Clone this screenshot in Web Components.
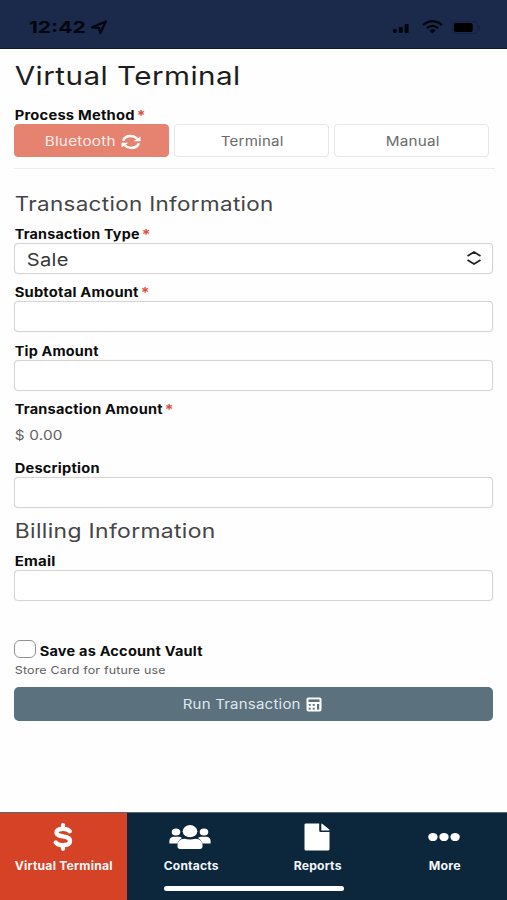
<!DOCTYPE html>
<html lang="en">
<head>
<meta charset="utf-8">
<title>Virtual Terminal</title>
<style>
html,body{margin:0;height:100%;background:#fefefe}
body{font-family:Inter,"Liberation Sans",sans-serif;overflow:hidden}
</style>
</head>
<body>
<terminal-app></terminal-app>
<script>
const shadow = (el, html) => { el.attachShadow({mode:'open'}).innerHTML = html; };

// Wide-set text: the glyphs are stretched to fill the width given in "w".
class WideText extends HTMLElement {
  constructor(){ super(); shadow(this, `<style>
    :host{display:block;flex:none;white-space:nowrap;text-align:left;line-height:18px;height:18px;font-size:12.9px;letter-spacing:.015em}
    span{display:inline-block;transform-origin:0 50%;line-height:inherit;vertical-align:top}
    </style><span><slot></slot></span>`); }
  connectedCallback(){
    const w = parseFloat(this.getAttribute('w'));
    this.style.width = w + 'px';
    const s = this.shadowRoot.querySelector('span');
    s.style.transform = `translateX(.7px) scaleX(${w / s.getBoundingClientRect().width})`;
  }
}
customElements.define('wide-text', WideText);

class StatusBar extends HTMLElement {
  constructor(){ super(); shadow(this, `<style>
    :host{display:flex;box-sizing:border-box;height:49px;padding:6px 26px 0 28px;background:#1b294b;border-bottom:1px solid #10193a;align-items:center;color:#03060f}
    wide-text{font-size:16.3px;font-weight:700;letter-spacing:0}
    .loc{margin-left:5px}.sig{margin-left:auto}.wifi{margin-left:13px}.bat{margin-left:9px}
    svg{display:block}
    </style>
    <wide-text w="57">12:42</wide-text>
    <svg class="loc" width="18" height="15" viewBox="0 0 18 15"><path d="M2 7.3 L15.8 1.5 L10.3 13 L9 7.8Z" fill="none" stroke="#03060f" stroke-width="2.3" stroke-linejoin="round"/></svg>
    <svg class="sig" width="17" height="12" viewBox="0 0 17 12" style="margin-top:2px"><g fill="#03060f"><rect x="1" y="7" width="3.7" height="4" rx="1"/><rect x="6.8" y="5" width="4" height="6" rx="1"/><rect x="12.6" y="2" width="4" height="9" rx="1"/></g></svg>
    <svg class="wifi" width="21" height="14" viewBox="0 0 21 14"><g fill="none" stroke="#03060f" stroke-width="2.1"><path d="M1 5 Q10.5 -2.6 20 5"/><path d="M4.7 8.3 Q10.5 3.6 16.3 8.3"/></g><path d="M7.3 10.5 Q10.5 8.1 13.7 10.5 L10.5 13.6Z" fill="#03060f"/></svg>
    <svg class="bat" width="29" height="13" viewBox="0 0 29 13"><rect x=".5" y=".5" width="25" height="12" rx="3.5" fill="none" stroke="#142042"/><rect x="2" y="2" width="18.7" height="9" rx="2" fill="#000"/><path d="M27.3 4.5v4" stroke="#142042" stroke-width="1.3"/></svg>`); }
}
customElements.define('status-bar', StatusBar);

class FormLabel extends HTMLElement {
  constructor(){ super(); shadow(this, `<style>
    :host{display:flex;gap:2px;height:18px;color:#0c0c0c;font-weight:750}
    wide-text{line-height:20px}
    .star{color:#dc5140;font-weight:700;font-size:14px}
    :host(:not([required])) .star{display:none}
    </style><wide-text w="${this.getAttribute('w')}"><slot></slot></wide-text><wide-text class="star" w="9">*</wide-text>`); }
}
customElements.define('form-label', FormLabel);

class FormField extends HTMLElement {
  constructor(){ super();
    const req = this.hasAttribute('required') ? 'required' : '';
    shadow(this, `<style>
    :host{display:block;height:58.65px}
    .box{box-sizing:border-box;display:flex;align-items:center;height:31px;width:479px;border:1.5px solid #d5d5d5;border-radius:4px;background:#fff;padding:3px 10px 0 11px;box-shadow:0 0 1px #ddd}
    :host([plain]) .box{border:0;background:none;box-shadow:none;padding:0;height:35px}
    </style><form-label ${req} w="${this.getAttribute('w')}">${this.getAttribute('label')}</form-label><div class="box"><slot></slot></div>`); }
}
customElements.define('form-field', FormField);

class MethodButton extends HTMLElement {
  constructor(){ super(); shadow(this, `<style>
    :host{box-sizing:border-box;display:flex;align-items:center;justify-content:center;gap:6px;height:33px;width:155px;border:1.5px solid #e7e7e9;border-radius:4px;color:#6b6b6b;background:#fff;padding-top:3px}
    :host([active]){background:#e58270;border-color:#e58270;color:#fbece8;padding-left:1px}
    </style><slot></slot>`); }
}
customElements.define('method-button', MethodButton);

class TabItem extends HTMLElement {
  constructor(){ super(); shadow(this, `<style>
    :host{display:flex;flex:1;flex-direction:column;align-items:center;color:#f4f6f8;padding-top:7px}
    :host([active]){background:#d64225}
    .icon{height:36px;display:flex;align-items:center}
    wide-text{font-size:11.4px;font-weight:750;line-height:20px}
    </style><div class="icon"><slot></slot></div><wide-text w="${this.getAttribute('w')}">${this.getAttribute('label')}</wide-text>`); }
}
customElements.define('tab-item', TabItem);

class TabBar extends HTMLElement {
  constructor(){ super(); shadow(this, `<style>
    :host{display:flex;position:relative;box-sizing:border-box;height:88px;background:#0c263b;border-top:1px solid #5b6670}
    .home{position:absolute;left:164px;top:73px;width:180px;height:5px;border-radius:3px;background:#fff}
    svg{display:block;margin-top:-2px}
    </style>
    <tab-item active label="Virtual Terminal" w="98"><svg width="20" height="28" viewBox="0 0 20 28"><path d="M16.7 8.3 C15.5 6.5 12.8 5.8 10 5.8 C6.5 5.8 3.5 6.8 3.5 9.6 C3.5 15.1 17 11.6 17 17.8 C17 21 13.7 22.2 10 22.2 C7 22.2 4 21.2 2.8 19.5 M10 2.2V5.6 M10 22.4V25.8" fill="none" stroke="#fff" stroke-width="4.3" stroke-linecap="round"/></svg></tab-item>
    <tab-item label="Contacts" w="55"><svg width="42" height="26" viewBox="0 0 42 26"><g fill="#fff"><ellipse cx="7" cy="8" rx="4.3" ry="3.6"/><ellipse cx="35" cy="8" rx="4.3" ry="3.6"/><path d="M.4 19.5v-2.2Q.4 12.8 5 12.8h5.2Q12 13 13 14.1 9.2 16 8.3 19.5Z"/><path d="M41.6 19.5v-2.2Q41.6 12.8 37 12.8h-5.2Q30 13 29 14.1 32.8 16 33.7 19.5Z"/><ellipse cx="21" cy="7.2" rx="7.3" ry="6.1"/><path d="M8.5 25V21.5Q8.5 14.7 15.5 14.7 21 16.3 26.5 14.7 33.5 14.7 33.5 21.5V22.6Q33.5 25 30.8 25H11.2Q8.5 25 8.5 22.6Z"/></g></svg></tab-item>
    <tab-item label="Reports" w="48"><svg width="26" height="28" viewBox="0 0 26 28"><path d="M2 .5H15.2V7.5Q15.2 9 16.7 9H25.5V26.3Q25.5 27.5 24 27.5H2Q.5 27.5.5 26.3V1.7Q.5.5 2 .5Z M17.3.5Q18 .6 18.5 1.1L25 6.2Q25.5 6.7 25.5 7.4H17.3Z" fill="#fff"/></svg></tab-item>
    <tab-item label="More" w="32"><svg width="32" height="10" viewBox="0 0 32 10"><g fill="#fff"><ellipse cx="4.9" cy="5" rx="4.7" ry="4.1"/><ellipse cx="16" cy="5" rx="4.7" ry="4.1"/><ellipse cx="27.1" cy="5" rx="4.7" ry="4.1"/></g></svg></tab-item>
    <div class="home"></div>`); }
}
customElements.define('tab-bar', TabBar);

class TerminalApp extends HTMLElement {
  constructor(){ super(); shadow(this, `<style>
    :host{display:flex;flex-direction:column;width:507px;height:900px;background:#fefefe}
    main{flex:1;min-height:0;padding:12px 12px 0 14.4px}
    h1,h2,hr{margin:0;font-weight:400}
    h1{height:30px;color:#1d1d1d}
    h1 wide-text{font-size:25.5px;height:30px;line-height:30px}
    h2{color:#454545}
    h2 wide-text{font-size:19.6px;height:24px;line-height:24px}
    .process{margin-top:15px}
    .methods{display:flex;gap:5px}
    hr{border:0;border-top:1px solid #ececec;margin:11px 0 23px}
    .fields{margin-top:8.5px}
    .sale{font-size:17.8px;color:#383838}
    .updown{margin-left:auto;margin-top:-3px}
    .email{margin-top:9px}
    .save{display:flex;gap:3px;margin-top:29px}
    input{appearance:none;box-sizing:border-box;width:22px;height:18px;margin:0;border:1.7px solid #929292;border-radius:6px;background:#fff}
    .save form-label{margin-top:2px}
    .hint{font-size:10.9px;color:#606060;margin-top:1px}
    button{box-sizing:border-box;display:flex;align-items:center;justify-content:center;gap:6px;width:479px;height:34px;margin:8px 0 0;padding:2px 3px 0 0;border:0;border-radius:5px;background:#5b717d;color:#dfe8ec;font:inherit}
    svg{display:block}
    </style>
    <status-bar></status-bar>
    <main>
      <h1><wide-text w="226">Virtual Terminal</wide-text></h1>
      <form-label class="process" required w="120">Process Method</form-label>
      <div class="methods">
        <method-button active><wide-text w="71">Bluetooth</wide-text><svg width="20" height="16" viewBox="0 0 20 16"><g fill="none" stroke="#fff" stroke-width="2.5"><path d="M2.2 6.8C3 3.9 6 2.1 9.6 2.1 12.3 2.1 14.6 3.1 16.2 4.7"/><path d="M17.8 9.2C17 12.1 14 13.9 10.4 13.9 7.7 13.9 5.4 12.9 3.8 11.3"/></g><path d="M19.5 2.4V7.2H12.6Z M.5 13.6V8.8H7.4Z" fill="#fff"/></svg></method-button>
        <method-button><wide-text w="63">Terminal</wide-text></method-button>
        <method-button><wide-text w="54">Manual</wide-text></method-button>
      </div>
      <hr>
      <h2><wide-text w="259">Transaction Information</wide-text></h2>
      <div class="fields">
        <form-field required label="Transaction Type" w="125"><wide-text class="sale" w="42">Sale</wide-text><svg class="updown" width="16" height="16" viewBox="0 0 16 16"><path d="M1.5 6 8 2 14.5 6M1.5 10 8 14 14.5 10" fill="none" stroke="#222" stroke-width="1.8"/></svg></form-field>
        <form-field required label="Subtotal Amount" w="124"></form-field>
        <form-field label="Tip Amount" w="84"></form-field>
        <form-field required plain label="Transaction Amount" w="148"><wide-text w="48" style="color:#606060">$ 0.00</wide-text></form-field>
        <form-field label="Description" w="85"></form-field>
      </div>
      <h2 style="margin-top:1.5px"><wide-text w="201">Billing Information</wide-text></h2>
      <form-field class="email" label="Email" w="41"></form-field>
      <div class="save"><input type="checkbox"><form-label w="163">Save as Account Vault</form-label></div>
      <wide-text class="hint" w="151">Store Card for future use</wide-text>
      <button><wide-text w="118">Run Transaction</wide-text><svg width="16" height="15" viewBox="0 0 16 15"><rect x=".5" y=".5" width="15" height="14" rx="1.8" fill="#fff"/><g fill="#5b717d"><rect x="2.5" y="2.4" width="11" height="2.6"/><rect x="2.7" y="7" width="2" height="1.8"/><rect x="6.7" y="7" width="2" height="1.8"/><rect x="11" y="7" width="2.2" height="5.6"/><rect x="2.7" y="10.8" width="2" height="1.8"/><rect x="6.7" y="10.8" width="2" height="1.8"/></g></svg></button>
    </main>
    <tab-bar></tab-bar>`); }
}
customElements.define('terminal-app', TerminalApp);
</script>
</body>
</html>
